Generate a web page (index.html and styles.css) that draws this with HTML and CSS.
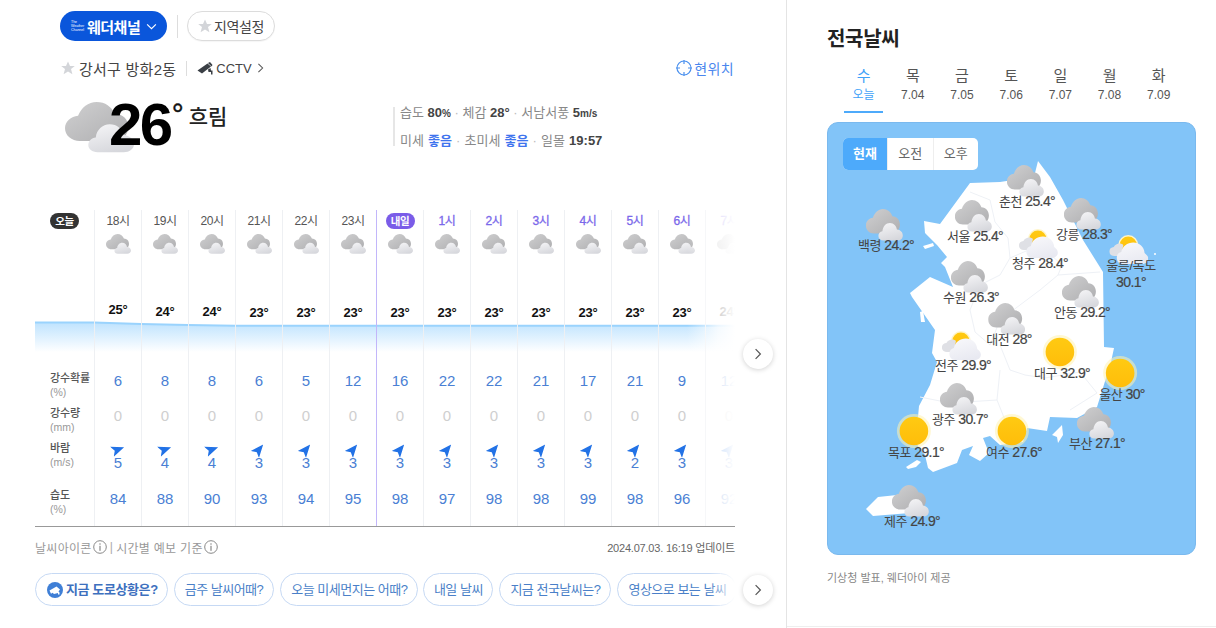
FILE: index.html
```html
<!DOCTYPE html>
<html lang="ko">
<head>
<meta charset="utf-8">
<title>날씨</title>
<link rel="stylesheet" href="styles.css">
</head>
<body>
<svg class="defs" width="0" height="0" aria-hidden="true">
  <defs>
    <linearGradient id="gBig" x1="0" y1="0" x2="1" y2="1"><stop offset="0" stop-color="#d0d0d1"/><stop offset="1" stop-color="#aeaeb0"/></linearGradient>
    <linearGradient id="gSmall" x1="0.2" y1="0" x2="0.6" y2="1"><stop offset="0" stop-color="#f4f4f6"/><stop offset="1" stop-color="#d6d7dc"/></linearGradient>
    <linearGradient id="gWhite" x1="0.2" y1="0" x2="0.6" y2="1"><stop offset="0" stop-color="#f8f8fb"/><stop offset="1" stop-color="#e8e9f1"/></linearGradient>
    <linearGradient id="gSun" x1="0" y1="0" x2="0" y2="1"><stop offset="0" stop-color="#ffca12"/><stop offset="1" stop-color="#ffbd0a"/></linearGradient>
    <linearGradient id="gBand" x1="0" y1="0" x2="0" y2="1"><stop offset="0" stop-color="#bfe3fe"/><stop offset="1" stop-color="#ffffff"/></linearGradient>
    <symbol id="cloud" viewBox="0 0 37 32" preserveAspectRatio="none">
      <path fill="url(#gBig)" d="M8 24.500C3.500 24.500 0 21 0 16.500C0 12.300 3.200 9 7 8.700C8.700 3.500 12.500 0 17 0C21.500 0 25 3 26.500 7.200C31 7.500 34 11 34 15.500C34 20.500 30.500 24.500 26 24.500Z"/>
      <path fill="url(#gSmall)" d="M17.500 31.500C14.500 31.500 12.500 29.500 12.500 27C12.500 24.500 14.200 22.500 16.500 22.200C17 17.500 20 14 24 14C28 14 30.500 17 31 20.500C34.500 20.700 37 23.500 37 26.500C37 29.500 34.500 31.500 31.500 31.500Z"/>
    </symbol>
    <symbol id="partly" viewBox="0 0 39 29">
      <circle cx="19" cy="10" r="10" fill="#fff5c8"/>
      <circle cx="19" cy="10" r="8.500" fill="url(#gSun)"/>
      <path fill="#dfe0e5" d="M5 21C2 21 0 19 0 16.500C0 14 2 12.300 4.500 12.100C5.500 9.800 8 8.500 10.500 8.500C12 8.500 13 9 14 10L12 21Z"/>
      <path fill="url(#gWhite)" d="M13 29C9.500 29 7.500 26 7.500 22.500C7.500 19.500 9.500 17.500 12 17C13 11.500 18 7.500 24 7.500C30 7.500 35 12 35.300 18C36.800 19.500 39 20.800 39 23.500C39 26.500 36.500 29 33 29Z"/>
    </symbol>
    <symbol id="sun" viewBox="0 0 36 36">
      <circle cx="18" cy="18" r="17" fill="#fff3b0" opacity=".55"/>
      <circle cx="18" cy="18" r="14.300" fill="url(#gSun)"/>
    </symbol>
    <symbol id="nav" viewBox="0 0 14 14">
      <path d="M7 0L12.800 14L7 10.700L1.200 14Z" fill="#2272e6"/>
    </symbol>
    <symbol id="info" viewBox="0 0 14 14">
      <circle cx="7" cy="7" r="6.300" fill="none" stroke="#888" stroke-width="1"/>
      <rect x="6.400" y="3.300" width="1.200" height="1.400" fill="#888"/>
      <rect x="6.400" y="5.800" width="1.200" height="5" fill="#888"/>
    </symbol>
    <symbol id="star" viewBox="0 0 14 14">
      <path d="M7 .5L9 5H13.800L10 8.100L11.400 13.300L7 10.400L2.600 13.300L4 8.100L.2 5H5Z" fill="#d3d5d9"/>
    </symbol>
    <symbol id="chev" viewBox="0 0 10 16">
      <path d="M2 2L8 8L2 14" fill="none" stroke="#555" stroke-width="1.500"/>
    </symbol>
  </defs>
</svg>

<div class="page">
  <main class="left">
    <div class="topbar">
      <button class="channel">
        <span class="twc">The<br>Weather<br>Channel</span>
        <span>웨더채널</span>
        <svg class="channel-chev" viewBox="0 0 12 8"><path d="M1 1.500L6 6.500L11 1.500" fill="none" stroke="#fff" stroke-width="1.300"/></svg>
      </button>
      <span class="bar-sep"></span>
      <button class="region"><svg class="star"><use href="#star"/></svg>지역설정</button>
    </div>

    <div class="locrow">
      <svg class="star star-loc"><use href="#star"/></svg>
      <span class="locname">강서구 방화2동</span>
      <span class="loc-sep"></span>
      <svg class="cctv" viewBox="0 0 16 13"><path d="M.5 8.500L10.500 1.500L14 4.500L5 11.500Z" fill="#3a3f45"/><path d="M11 1L13 0L15.500 3L14.500 4.500Z" fill="#3a3f45"/><path d="M11 7.500L13.500 6L14 8.500L15.500 8.500V12.500H14V10L11.500 10Z" fill="#3a3f45"/></svg>
      <span class="cctv-t">CCTV</span>
      <svg class="loc-chev"><use href="#chev"/></svg>
      <span class="here">
        <svg viewBox="0 0 16 16"><circle cx="8" cy="8" r="7" fill="none" stroke="#4a90ee" stroke-width="1.200"/><path d="M8 0V4M8 12V16M0 8H4M12 8H16" stroke="#4a90ee" stroke-width="1.200"/></svg>
        현위치
      </span>
    </div>

    <div class="now">
      <div class="now-main">
        <svg class="now-icon"><use href="#cloud"/></svg>
        <span class="now-temp">26</span><span class="now-deg">°</span>
        <span class="now-sky">흐림</span>
      </div>
      <div class="now-stats">
        <p>습도 <b>80<small>%</small></b> <i>·</i> 체감 <b>28°</b> <i>·</i> 서남서풍 <b>5<small>m/s</small></b></p>
        <p>미세 <em>좋음</em> <i>·</i> 초미세 <em>좋음</em> <i>·</i> 일몰 <b>19:57</b></p>
      </div>
    </div>

    <section class="chart">
      <svg class="band" viewBox="0 0 700 32" preserveAspectRatio="none">
        <path d="M0 2.500L59 2.500L106 4L153 5L200 5.800L700 5.800V32H0Z" fill="url(#gBand)"/>
        <path d="M0 2.500L59 2.500L106 4L153 5L200 5.800L700 5.800" fill="none" stroke="#9ad3fd" stroke-width="2"/>
      </svg>
      <div class="cols">
        <div class="col labels">
          <div class="r-hour"><span class="chip chip-today">오늘</span></div>
          <div class="r-icon"></div>
          <div class="r-temp"></div>
          <div class="r-prob"><b>강수확률</b><span>(%)</span></div>
          <div class="r-rain"><b>강수량</b><span>(mm)</span></div>
          <div class="r-wind"><b>바람</b><span>(m/s)</span></div>
          <div class="r-hum"><b>습도</b><span>(%)</span></div>
        </div>

        <div class="col"><div class="r-hour">18시</div><div class="r-icon"><svg class="hicon"><use href="#cloud"/></svg></div><div class="r-temp"><span style="padding-top:47px">25°</span></div><div class="r-prob v">6</div><div class="r-rain v z">0</div><div class="r-wind v"><svg class="nav" style="transform:rotate(70deg)"><use href="#nav"/></svg>5</div><div class="r-hum v">84</div></div>
        <div class="col"><div class="r-hour">19시</div><div class="r-icon"><svg class="hicon"><use href="#cloud"/></svg></div><div class="r-temp"><span style="padding-top:49px">24°</span></div><div class="r-prob v">8</div><div class="r-rain v z">0</div><div class="r-wind v"><svg class="nav" style="transform:rotate(70deg)"><use href="#nav"/></svg>4</div><div class="r-hum v">88</div></div>
        <div class="col"><div class="r-hour">20시</div><div class="r-icon"><svg class="hicon"><use href="#cloud"/></svg></div><div class="r-temp"><span style="padding-top:49px">24°</span></div><div class="r-prob v">8</div><div class="r-rain v z">0</div><div class="r-wind v"><svg class="nav" style="transform:rotate(70deg)"><use href="#nav"/></svg>4</div><div class="r-hum v">90</div></div>
        <div class="col"><div class="r-hour">21시</div><div class="r-icon"><svg class="hicon"><use href="#cloud"/></svg></div><div class="r-temp"><span style="padding-top:50px">23°</span></div><div class="r-prob v">6</div><div class="r-rain v z">0</div><div class="r-wind v"><svg class="nav" style="transform:rotate(40deg)"><use href="#nav"/></svg>3</div><div class="r-hum v">93</div></div>
        <div class="col"><div class="r-hour">22시</div><div class="r-icon"><svg class="hicon"><use href="#cloud"/></svg></div><div class="r-temp"><span style="padding-top:50px">23°</span></div><div class="r-prob v">5</div><div class="r-rain v z">0</div><div class="r-wind v"><svg class="nav" style="transform:rotate(40deg)"><use href="#nav"/></svg>3</div><div class="r-hum v">94</div></div>
        <div class="col"><div class="r-hour">23시</div><div class="r-icon"><svg class="hicon"><use href="#cloud"/></svg></div><div class="r-temp"><span style="padding-top:50px">23°</span></div><div class="r-prob v">12</div><div class="r-rain v z">0</div><div class="r-wind v"><svg class="nav" style="transform:rotate(40deg)"><use href="#nav"/></svg>3</div><div class="r-hum v">95</div></div>
        <div class="col col-tmr"><div class="r-hour"><span class="chip chip-tmr">내일</span></div><div class="r-icon"><svg class="hicon"><use href="#cloud"/></svg></div><div class="r-temp"><span style="padding-top:50px">23°</span></div><div class="r-prob v">16</div><div class="r-rain v z">0</div><div class="r-wind v"><svg class="nav" style="transform:rotate(40deg)"><use href="#nav"/></svg>3</div><div class="r-hum v">98</div></div>
        <div class="col"><div class="r-hour night">1시</div><div class="r-icon"><svg class="hicon"><use href="#cloud"/></svg></div><div class="r-temp"><span style="padding-top:50px">23°</span></div><div class="r-prob v">22</div><div class="r-rain v z">0</div><div class="r-wind v"><svg class="nav" style="transform:rotate(40deg)"><use href="#nav"/></svg>3</div><div class="r-hum v">97</div></div>
        <div class="col"><div class="r-hour night">2시</div><div class="r-icon"><svg class="hicon"><use href="#cloud"/></svg></div><div class="r-temp"><span style="padding-top:50px">23°</span></div><div class="r-prob v">22</div><div class="r-rain v z">0</div><div class="r-wind v"><svg class="nav" style="transform:rotate(40deg)"><use href="#nav"/></svg>3</div><div class="r-hum v">98</div></div>
        <div class="col"><div class="r-hour night">3시</div><div class="r-icon"><svg class="hicon"><use href="#cloud"/></svg></div><div class="r-temp"><span style="padding-top:50px">23°</span></div><div class="r-prob v">21</div><div class="r-rain v z">0</div><div class="r-wind v"><svg class="nav" style="transform:rotate(40deg)"><use href="#nav"/></svg>3</div><div class="r-hum v">98</div></div>
        <div class="col"><div class="r-hour night">4시</div><div class="r-icon"><svg class="hicon"><use href="#cloud"/></svg></div><div class="r-temp"><span style="padding-top:50px">23°</span></div><div class="r-prob v">17</div><div class="r-rain v z">0</div><div class="r-wind v"><svg class="nav" style="transform:rotate(40deg)"><use href="#nav"/></svg>3</div><div class="r-hum v">99</div></div>
        <div class="col"><div class="r-hour night">5시</div><div class="r-icon"><svg class="hicon"><use href="#cloud"/></svg></div><div class="r-temp"><span style="padding-top:50px">23°</span></div><div class="r-prob v">21</div><div class="r-rain v z">0</div><div class="r-wind v"><svg class="nav" style="transform:rotate(40deg)"><use href="#nav"/></svg>2</div><div class="r-hum v">98</div></div>
        <div class="col"><div class="r-hour night">6시</div><div class="r-icon"><svg class="hicon"><use href="#cloud"/></svg></div><div class="r-temp"><span style="padding-top:50px">23°</span></div><div class="r-prob v">9</div><div class="r-rain v z">0</div><div class="r-wind v"><svg class="nav" style="transform:rotate(40deg)"><use href="#nav"/></svg>3</div><div class="r-hum v">96</div></div>
        <div class="col"><div class="r-hour night">7시</div><div class="r-icon"><svg class="hicon"><use href="#cloud"/></svg></div><div class="r-temp"><span style="padding-top:49px">24°</span></div><div class="r-prob v">12</div><div class="r-rain v z">0</div><div class="r-wind v"><svg class="nav" style="transform:rotate(40deg)"><use href="#nav"/></svg>3</div><div class="r-hum v">92</div></div>
      </div>
      <div class="fade"></div>
      <button class="round round-chart"><svg><use href="#chev"/></svg></button>
    </section>

    <div class="foot">
      <span class="foot-l">날씨아이콘<svg class="info"><use href="#info"/></svg><span class="pipe">|</span>시간별 예보 기준<svg class="info"><use href="#info"/></svg></span>
      <span class="foot-r">2024.07.03. 16:19 업데이트</span>
    </div>

    <div class="chips-wrap">
      <div class="chips">
        <a class="q q-main"><svg class="q-ic" viewBox="0 0 16 16"><circle cx="8" cy="8" r="8" fill="#3f7fd6"/><path d="M2.500 8.500L9.500 4.500L13 7.500L11.500 9.500L12.500 10.500V12.500H11V11L7 12L5.500 10.800L4 11.800Z" fill="#fff"/></svg>지금 도로상황은?</a>
        <a class="q">금주 날씨어때?</a>
        <a class="q">오늘 미세먼지는 어때?</a>
        <a class="q q-short">내일 날씨</a>
        <a class="q">지금 전국날씨는?</a>
        <a class="q">영상으로 보는 날씨</a>
      </div>
      <div class="chips-fade"></div>
      <button class="round round-chips"><svg><use href="#chev"/></svg></button>
    </div>
  </main>

  <aside class="right">
    <h2 class="title">전국날씨</h2>
    <div class="days">
      <div class="day on"><b>수</b><span>오늘</span></div>
      <div class="day"><b>목</b><span>7.04</span></div>
      <div class="day"><b>금</b><span>7.05</span></div>
      <div class="day"><b>토</b><span>7.06</span></div>
      <div class="day"><b>일</b><span>7.07</span></div>
      <div class="day"><b>월</b><span>7.08</span></div>
      <div class="day"><b>화</b><span>7.09</span></div>
    </div>

    <div class="map">
      <svg class="land" viewBox="827 122 369 433">
        <g fill="#fff">
          <path d="M1038 161L1050 177L1063 200L1083 240L1103 272L1104 347L1114 348L1111 362L1097 407L1077 418L1050 417L1047 431L1027 428L1023 442L1000 445L990 436L983 438L989 453L980 461L969 455L973 446L962 450L957 463L933 472L928 468L925 455L918 446L910 425L918 417L919 406L930 385L937 362L932 353L935 330L912 297L910 293L930 277L953 287L945 267L941 263L947 257L937 245L925 233L924 221L940 224L970 183L1000 182L1034 177Z"/>
          <path d="M923 246L933 243L934 246L925 249Z"/>
          <path d="M920 312L923 311L925 322L921 322Z"/>
          <path d="M906 467L917 460L921 462L916 467L908 469Z"/>
          <path d="M1052 435L1062 425L1063 435L1058 443L1057 437Z"/>
          <path d="M866 509L878 497L897 495L905 503L910 513L873 516Z"/>
          <circle cx="1155" cy="254" r="1"/>
        </g>
        <g fill="none" stroke="#eef1f6" stroke-width="1">
          <path d="M970 192L990 200L995 222L1008 238L1010 258L1000 275L980 285"/>
          <path d="M1010 258L1040 245L1062 265L1058 275L1100 272"/>
          <path d="M980 285L970 310L975 332L990 345L1000 320L1040 290L1058 275"/>
          <path d="M1000 345L1010 370L1025 375L1045 378L1080 372L1097 393L1070 410"/>
          <path d="M1000 370L997 400L1005 420M997 400L965 402L945 402L920 397"/>
        </g>
      </svg>

      <div class="seg">
        <span class="seg-i seg-on">현재</span><span class="seg-i">오전</span><span class="seg-i">오후</span>
      </div>

      <div class="pin" style="left:59px;top:87px"><svg class="p-cloud"><use href="#cloud"/></svg><span>백령 <b>24.2°</b></span></div>
      <div class="pin" style="left:200px;top:43px"><svg class="p-cloud"><use href="#cloud"/></svg><span>춘천 <b>25.4°</b></span></div>
      <div class="pin" style="left:148px;top:78px"><svg class="p-cloud"><use href="#cloud"/></svg><span>서울 <b>25.4°</b></span></div>
      <div class="pin" style="left:257px;top:76px"><svg class="p-cloud"><use href="#cloud"/></svg><span>강릉 <b>28.3°</b></span></div>
      <div class="pin" style="left:213px;top:107px"><svg class="p-partly"><use href="#partly"/></svg><span>청주 <b>28.4°</b></span></div>
      <div class="pin pin-far" style="left:304px;top:113px"><svg class="p-partly"><use href="#partly"/></svg><span>울릉/독도<br><b>30.1°</b></span></div>
      <div class="pin" style="left:144px;top:139px"><svg class="p-cloud"><use href="#cloud"/></svg><span>수원 <b>26.3°</b></span></div>
      <div class="pin" style="left:255px;top:154px"><svg class="p-cloud"><use href="#cloud"/></svg><span>안동 <b>29.2°</b></span></div>
      <div class="pin" style="left:182px;top:181px"><svg class="p-cloud"><use href="#cloud"/></svg><span>대전 <b>28°</b></span></div>
      <div class="pin" style="left:136px;top:209px"><svg class="p-partly"><use href="#partly"/></svg><span>전주 <b>29.9°</b></span></div>
      <div class="pin" style="left:235px;top:212px"><svg class="p-sun"><use href="#sun"/></svg><span>대구 <b>32.9°</b></span></div>
      <div class="pin" style="left:295px;top:233px"><svg class="p-sun"><use href="#sun"/></svg><span>울산 <b>30°</b></span></div>
      <div class="pin" style="left:133px;top:261px"><svg class="p-cloud"><use href="#cloud"/></svg><span>광주 <b>30.7°</b></span></div>
      <div class="pin" style="left:89px;top:291px"><svg class="p-sun"><use href="#sun"/></svg><span>목포 <b>29.1°</b></span></div>
      <div class="pin" style="left:187px;top:291px"><svg class="p-sun"><use href="#sun"/></svg><span>여수 <b>27.6°</b></span></div>
      <div class="pin" style="left:270px;top:285px"><svg class="p-cloud"><use href="#cloud"/></svg><span>부산 <b>27.1°</b></span></div>
      <div class="pin" style="left:85px;top:363px"><svg class="p-cloud"><use href="#cloud"/></svg><span>제주 <b>24.9°</b></span></div>
    </div>

    <p class="credit">기상청 발표, 웨더아이 제공</p>
    <div class="rule"></div>
  </aside>
</div>
</body>
</html>
```

FILE: styles.css
```css
* { box-sizing: border-box; }
html, body { margin: 0; padding: 0; }
body {
  width: 1216px;
  height: 628px;
  overflow: hidden;
  background: #fff;
  color: #333;
  font-family: "Liberation Sans", "Noto Sans CJK KR", Arial, sans-serif;
}
button { font: inherit; padding: 0; cursor: pointer; }
p, h2 { margin: 0; }
.defs { position: absolute; }

.page { display: flex; height: 628px; }
.left {
  width: 787px;
  height: 628px;
  padding: 11px 0 0 35px;
  border-right: 1px solid #e4e4e4;
  flex: none;
}
.right { width: 429px; flex: none; padding: 0 20px 0 40px; position: relative; }

/* top bar */
.topbar { display: flex; align-items: center; padding-left: 25px; height: 30px; }
.channel {
  height: 30px; width: 107px; border: 0; border-radius: 15px;
  background: #0a56db; color: #fff;
  display: flex; align-items: center; padding-left: 11px;
  font-size: 15px; font-weight: 700; letter-spacing: -.5px;
}
.twc { font-size: 3.500px; line-height: 4px; width: 16px; text-align: left; font-weight: 400; letter-spacing: 0; }
.channel-chev { width: 11px; height: 7px; margin-left: 6px; }
.bar-sep { width: 1px; height: 23px; background: #ddd; margin: 0 9px 0 10px; }
.region {
  width: 88px; height: 30px; border: 1px solid #dcdcdc; border-radius: 15px;
  background: #fff; color: #444; font-size: 14px; letter-spacing: -.4px;
  display: flex; align-items: center; justify-content: center; gap: 2px;
  box-shadow: 0 1px 1px rgba(0,0,0,.04);
}
.star { width: 14px; height: 14px; }

/* location row */
.locrow {
  display: flex; align-items: center; height: 24px; margin-top: 15px;
  padding-left: 26px; width: 700px; position: relative;
}
.star-loc { width: 14px; height: 14px; }
.locname { font-size: 15px; color: #444; margin-left: 4px; letter-spacing: .25px; }
.loc-sep { width: 1px; height: 15px; background: #ddd; margin: 0 10px; }
.cctv { width: 16px; height: 13px; }
.cctv-t { font-size: 13px; color: #444; margin-left: 3px; }
.loc-chev { width: 7px; height: 12px; margin-left: 5px; }
.here {
  margin-left: auto; display: flex; align-items: center; gap: 2px;
  color: #4a86ee; font-size: 14px; letter-spacing: .4px; margin-right: 1px;
}
.here svg { width: 16px; height: 16px; }

/* current */
.now { display: flex; height: 100px; margin-top: 10px; }
.now-main { width: 358px; padding-left: 30px; position: relative; display: flex; align-items: flex-start; }
.now-icon { width: 69px; height: 51px; margin-top: 12px; }
.now-temp {
  font-size: 60px; font-weight: 700; line-height: 60px; color: #000;
  letter-spacing: -2.500px; margin: 5px 0 0 -25px;
}
.now-deg { font-size: 30px; line-height: 30px; color: #111; margin: 9px 0 0 1px; -webkit-text-stroke: .4px #111; }
.now-sky { font-size: 21px; font-weight: 500; color: #222; line-height: 26px; margin: 14px 0 0 5px; }
.now-stats { border-left: 2px solid #e6e6e6; height: 39px; margin-top: 17px; padding-left: 5px; font-size: 13px; color: #888; }
.now-stats p { height: 14px; line-height: 12px; margin: 0 0 14px; white-space: nowrap; }
.now-stats p + p { word-spacing: .5px; }
.now-stats b { color: #444; }
.now-stats small { font-size: 10px; }
.now-stats i { font-style: normal; color: #bbb; }
.now-stats em { font-style: normal; font-weight: 700; color: #3f74ee; }

/* hourly chart */
.chart {
  position: relative; width: 700px; height: 317px; margin-top: 20px;
  border-bottom: 1px solid #999;
}
.cols { position: relative; display: flex; width: 700px; height: 316px; overflow: hidden; }
.col { flex: none; width: 47px; border-left: 1px solid #eef0f3; text-align: center; }
.col.labels { width: 59px; border-left: 0; text-align: left; padding-left: 15px; }
.col-tmr { border-left-color: #c2b6fa; }
.r-hour { height: 20px; padding-top: 3px; font-size: 12px; line-height: 14px; color: #555; letter-spacing: -.4px; }
.col .r-hour:not(:has(.chip)) { padding-top: 4px; }
.r-hour.night { color: #7a68ea; -webkit-text-stroke: .3px #7a68ea; }
.r-icon { height: 21px; margin-top: 4px; }
.hicon { width: 25px; height: 20px; display: block; margin: 0 auto; }
.r-temp { height: 108px; }
.r-temp span { display: block; font-size: 13px; line-height: 16px; font-weight: 700; color: #111; letter-spacing: -.2px; position: relative; }
.r-prob { height: 36px; }
.r-rain { height: 34px; }
.r-wind { height: 47px; padding-top: 10px; }
.r-hum { height: 36px; }
.v { font-size: 15px; color: #4a7fd4; line-height: 36px; }
.r-rain.v { line-height: 34px; }
.r-rain.z { color: #cfcfcf; }
.r-wind.v { line-height: 14px; display: flex; flex-direction: column; align-items: center; }
.r-hum.v { line-height: 38px; }
.nav { width: 14px; height: 13px; flex: none; }
.labels .r-prob, .labels .r-wind, .labels .r-hum { padding-top: 9px; font-size: 11px; line-height: 13.500px; }
.labels .r-rain { padding-top: 8px; font-size: 11px; line-height: 13.500px; }
.labels b { display: block; font-weight: 500; color: #555; letter-spacing: -.1px; }
.labels span:not(.chip) { display: block; color: #999; font-size: 10.500px; }
.chip {
  display: block; width: 29px; height: 16px; border-radius: 8px; margin: 0 auto;
  color: #fff; font-size: 10.500px; line-height: 16px; font-weight: 700; text-align: center; letter-spacing: -.4px;
}
.chip-today { background: #333; margin: 0; }
.chip-tmr { background: #7a5ce8; }
.band { position: absolute; left: 0; top: 110px; width: 700px; height: 32px; pointer-events: none; }
.fade {
  position: absolute; right: 0; top: 0; width: 48px; height: 316px; z-index: 2;
  background: linear-gradient(90deg, rgba(255,255,255,0), rgba(255,255,255,.8) 65%, #fff);
  pointer-events: none;
}
.round {
  position: absolute; width: 30px; height: 30px; border-radius: 50%; border: 0; background: #fff; z-index: 3;
  box-shadow: 0 1px 5px rgba(0,0,0,.18);
  display: flex; align-items: center; justify-content: center;
}
.round svg { width: 8px; height: 14px; }
.round-chart { left: 708px; top: 129px; }

/* footer */
.foot { display: flex; justify-content: space-between; align-items: center; width: 700px; height: 20px; margin-top: 10px; }
.foot-l { display: flex; align-items: center; font-size: 12px; color: #999; letter-spacing: .3px; }
.info { width: 14px; height: 14px; margin-left: 1px; }
.pipe { margin: 0 3px 0 3px; color: #aaa; }
.foot-r { font-size: 11px; color: #666; letter-spacing: -.2px; }

.chips-wrap { position: relative; width: 700px; height: 33px; margin-top: 16px; }
.chips { display: flex; gap: 6px; width: 700px; overflow: hidden; }
.q {
  flex: none; height: 33px; padding: 0 10px; border: 1px solid #c6d9f4; border-radius: 17px;
  font-size: 13px; line-height: 31px; color: #4a7fc8; white-space: nowrap; letter-spacing: -.5px;
}
.q-short { width: 70px; text-align: center; margin-left: -1px; padding: 0; }
.q-main { display: flex; align-items: center; gap: 3px; font-weight: 700; padding: 0 9px 0 11px; color: #3d70be; letter-spacing: -.4px; }
.q-ic { width: 16px; height: 16px; }
.chips-fade {
  position: absolute; right: 0; top: 0; width: 26px; height: 33px;
  background: linear-gradient(90deg, rgba(255,255,255,0), #fff);
}
.round-chips { left: 708px; top: 2px; }

/* right pane */
.title { font-size: 20px; font-weight: 700; color: #222; line-height: 28px; padding-top: 25px; height: 51px; letter-spacing: -.3px; }
.days { display: flex; gap: 10px; margin: 14px 0 0 17px; height: 48px; }
.day {
  flex: 0 0 39.200px; height: 48px; border-bottom: 2px solid transparent;
  display: flex; flex-direction: column; align-items: center; color: #555; white-space: nowrap;
}
.day b { font-weight: 400; font-size: 15px; line-height: 22px; }
.day span { font-size: 12px; line-height: 16px; }
.day.on { color: #3fa2f8; border-bottom-color: #4daafb; }

.map {
  position: relative; width: 369px; height: 433px; margin-top: 9px;
  background: #82c4f8; border: 1px solid #7ab9ee; border-radius: 11px; overflow: hidden;
}
.land { position: absolute; left: -1px; top: -1px; width: 369px; height: 433px; }
.seg {
  position: absolute; left: 15px; top: 15px; display: flex; height: 32px; width: 135px;
  background: #fff; border-radius: 5px; overflow: hidden;
}
.seg-i { flex: 1; font-size: 13px; line-height: 32px; text-align: center; color: #666; border-left: 1px solid #eee; }
.seg-on { flex: 0 0 44px; background: #4daafb; color: #fff; font-weight: 700; border-left: 0; }
.pin {
  position: absolute; transform: translateX(-50%); margin: -1px 0 0 -1px;
  display: flex; flex-direction: column; align-items: center;
  white-space: nowrap;
}
.pin span { font-size: 13px; line-height: 16px; color: #444; letter-spacing: -.4px; text-align: center; margin-top: -4px; }
.pin b { font-weight: 400; font-size: 14px; letter-spacing: -.6px; -webkit-text-stroke: .2px #444; }
.p-cloud { width: 37px; height: 32px; margin-right: 4px; }
.p-partly { width: 39px; height: 29px; margin: 0 4px 1px 0; }
.pin-far .p-partly { margin-bottom: -2px; }
.p-sun { width: 36px; height: 36px; margin: 0 4px -1px 0; }
.credit { font-size: 11px; color: #888; margin-top: 16px; line-height: 14px; }
.rule { position: absolute; left: 0; right: 0; top: 626px; height: 1px; background: #eee; }
```
